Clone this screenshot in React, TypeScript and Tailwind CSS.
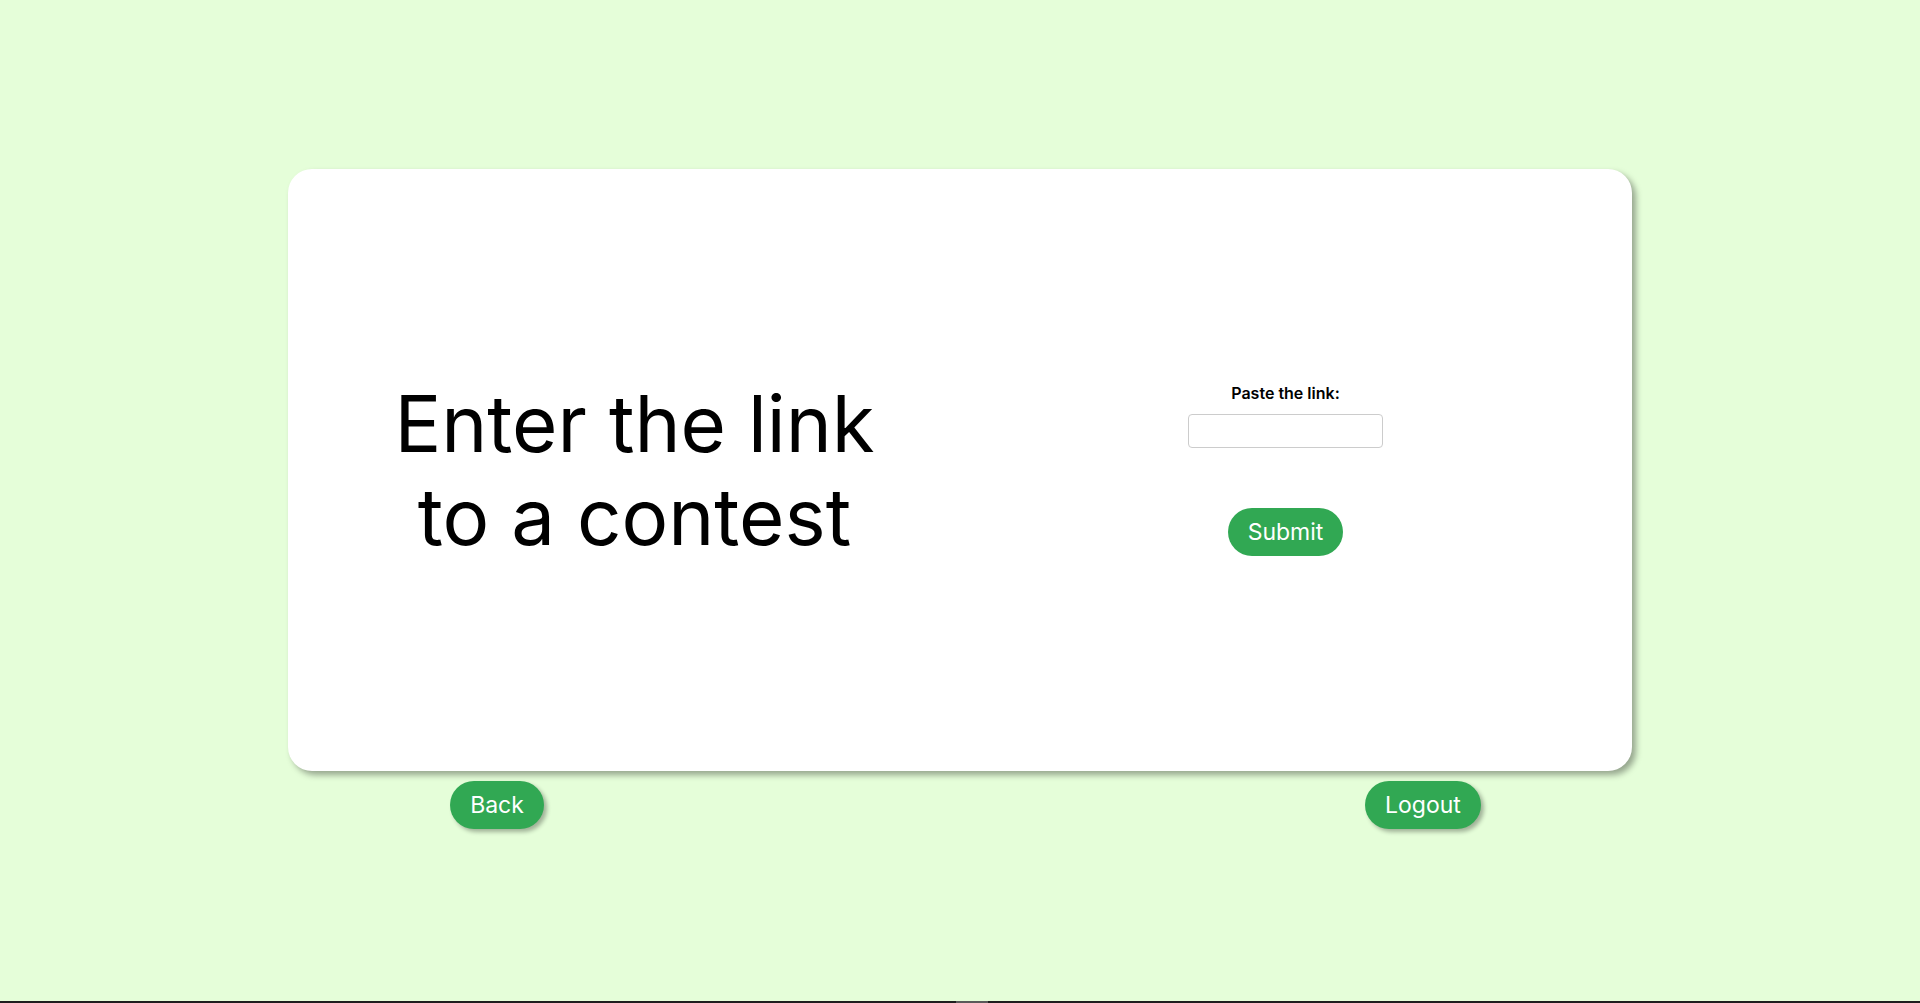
function GreenButton({ label, shadow }: { label: string; shadow?: boolean }) {
  return (
    <button
      className={
        shadow
          ? "h-12 rounded-full bg-[#31a853] px-5 text-[23px] leading-none text-white shadow-[3px_3px_4px_rgba(0,0,0,0.3)]"
          : "h-12 rounded-full bg-[#31a853] px-5 text-[23px] leading-none text-white"
      }
    >
      {label}
    </button>
  );
}

export default function App() {
  return (
    <div
      className="relative flex h-[1003px] w-full flex-col overflow-hidden bg-[#e5fed9] pt-[169px]"
      style={{ fontFamily: "Inter, 'Noto Sans', sans-serif" }}
    >
      <div className="mx-auto grid h-[602px] w-[1344px] grid-cols-2 rounded-[24px] bg-white px-[21px] shadow-[4px_4px_6px_rgba(0,0,0,0.35)]">
        <div className="flex items-center justify-center">
          <h1 className="text-center text-[78px] leading-[93px] font-normal text-black">
            Enter the link
            <br />
            to a contest
          </h1>
        </div>

        <div className="flex flex-col items-center justify-center">
          <label className="text-[16px] leading-[19px] font-semibold text-black">
            Paste the link:
          </label>
          <input
            type="text"
            className="mt-[11px] h-[34px] w-[195px] rounded-[4px] border border-[#cccccc] bg-white px-2 outline-none"
          />
          <div className="mt-[60px]">
            <GreenButton label="Submit" />
          </div>
        </div>
      </div>

      <div className="mx-auto mt-[10px] flex w-[1344px] justify-between">
        <div className="flex w-[418px] justify-center">
          <GreenButton label="Back" shadow />
        </div>
        <div className="flex w-[418px] justify-center">
          <GreenButton label="Logout" shadow />
        </div>
      </div>

      <div className="absolute bottom-0 left-0 flex h-[2px] w-full bg-[#1e1e1e]">
        <div className="ml-[956px] h-full w-[32px] bg-[#5a5a5a]" />
      </div>
    </div>
  );
}
